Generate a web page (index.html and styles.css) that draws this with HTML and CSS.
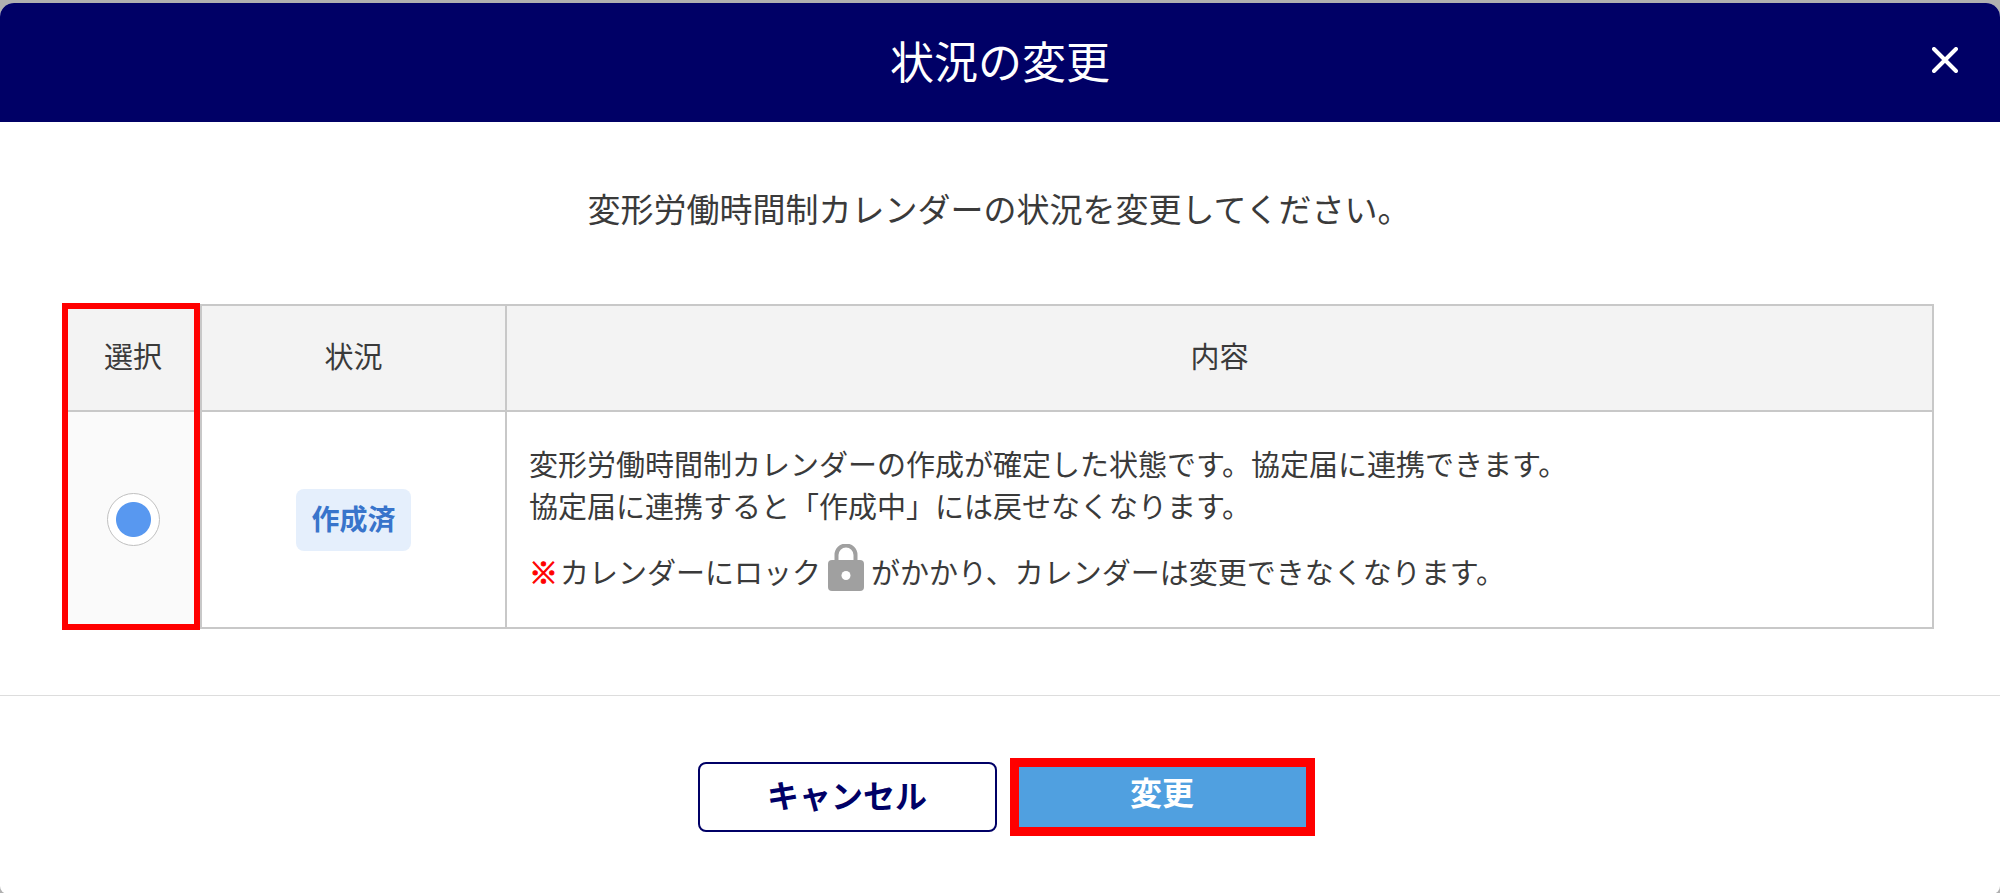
FILE: index.html
```
<!DOCTYPE html>
<html lang="ja">
<head>
  <meta charset="UTF-8" />
  <meta name="viewport" content="width=device-width, initial-scale=1" />
  <title>状況の変更</title>
  <link rel="stylesheet" href="styles.css">
</head>
<body>
  <div class="modal" role="dialog" aria-labelledby="modalTitle">
    <header class="modal-header">
      <h1 id="modalTitle">状況の変更</h1>
      <button class="close-btn" type="button" aria-label="閉じる">
        <svg viewBox="0 0 26 26" width="26" height="26" aria-hidden="true">
          <path d="M2 2 L24 24 M24 2 L2 24" fill="none" stroke="#fff" stroke-width="4" stroke-linecap="round" />
        </svg>
      </button>
    </header>

    <form class="modal-form">
      <div class="modal-body">
        <p class="lead">変形労働時間制カレンダーの状況を変更してください。</p>

        <div class="table-wrap">
          <table class="status-table">
            <thead>
              <tr>
                <th class="col-select">選択</th>
                <th class="col-status">状況</th>
                <th>内容</th>
              </tr>
            </thead>
            <tbody>
              <tr>
                <td class="cell-select">
                  <input type="radio" name="status" id="statusDone" value="done" checked />
                </td>
                <td class="cell-status"><label class="badge" for="statusDone">作成済</label></td>
                <td class="cell-desc">
                  <p>変形労働時間制カレンダーの作成が確定した状態です。協定届に連携できます。<br>協定届に連携すると「作成中」には戻せなくなります。</p>
                  <p class="note">
                    <span class="mark">※</span>
                    <span>カレンダーにロック</span>
                    <svg class="lock" viewBox="0 0 36 47" width="36" height="47" aria-hidden="true">
                      <path d="M8.500 18 V11 a9.500 9.500 0 0 1 19 0 V18" fill="none" stroke="#a0a0a0" stroke-width="4" />
                      <rect x="0" y="16" width="36" height="31" rx="4" fill="#a0a0a0" />
                      <circle cx="18" cy="31.500" r="4.500" fill="#fff" />
                    </svg>
                    <span>がかかり、カレンダーは変更できなくなります。</span>
                  </p>
                </td>
              </tr>
            </tbody>
          </table>
          <div class="highlight"></div>
        </div>
      </div>

      <footer class="modal-footer">
        <button class="btn btn-cancel" type="button">キャンセル</button>
        <button class="btn btn-submit" type="button">変更</button>
      </footer>
    </form>
  </div>
</body>
</html>
```
FILE: styles.css
```
* {
  margin: 0; padding: 0; box-sizing: border-box;
}
body {
  min-height: 100vh;
  display: flex;
  padding-top: 3px;
  background: #b0b0b0;
  color: #3a3a3a;
  font-family: 'Noto Sans CJK JP', sans-serif;
  font-size: 29px;
  line-height: 42px;
}
button {
  font-family: inherit;
  cursor: pointer;
}
.modal {
  display: flex;
  flex-direction: column;
  flex: 1;
  background: #fff;
  border-radius: 14px 14px 8px 8px;
  overflow: hidden;
}
.modal-header {
  display: grid;
  grid-template-columns: 1fr auto 1fr;
  align-items: center;
  height: 119px;
  padding: 0 42px 5px;
  background: #000066;
  color: #fff;
}
.modal-header h1 {
  grid-column: 2;
  font-size: 44px;
  font-weight: 400;
  line-height: 64px;
}
.close-btn {
  display: flex;
  justify-self: end;
  background: none;
  border: none;
}
.modal-form {
  display: flex;
  flex-direction: column;
  flex: 1;
}
.modal-body {
  padding: 62px 66px 66px 64px;
}
.lead {
  margin-bottom: 72px;
  font-size: 33px;
  line-height: 48px;
  text-align: center;
}
.table-wrap {
  position: relative;
}
.status-table {
  width: 100%;
  border-collapse: collapse;
  table-layout: fixed;
}
.status-table th,
.status-table td {
  border: 2px solid #c8c8c8;
}
.status-table th {
  height: 106px;
  padding-bottom: 6px;
  background: #f3f3f3;
  font-weight: 400;
}
.col-select {
  width: 136px;
}
.col-status {
  width: 305px;
}
.status-table td {
  height: 217px;
}
.status-table .cell-select {
  background: #fafafa;
}
.cell-select input {
  appearance: none;
  display: block;
  width: 53px;
  height: 53px;
  margin: 0 auto;
  border: 1px solid #c0c0c0;
  border-radius: 50%;
  background: #fff;
}
.cell-select input:checked {
  background: radial-gradient(circle, #5898f0 17px, #fff 18px);
}
.cell-status {
  text-align: center;
}
.badge {
  display: inline-block;
  height: 62px;
  padding: 0 15px;
  border-radius: 8px;
  background: #e5effc;
  color: #3874cb;
  font-size: 28px;
  font-weight: 700;
  line-height: 58px;
  vertical-align: middle;
}
.cell-desc {
  padding: 0 22px;
}
.note {
  display: flex;
  align-items: center;
  margin-top: 18px;
}
.note .mark {
  margin-right: 2px;
  color: #f00;
  font-weight: 700;
  -webkit-text-stroke: 1px #f00;
}
.note .lock {
  margin: 0 7px 6px;
}
/* red frame round the select column */
.highlight {
  position: absolute;
  top: -1px;
  bottom: -1px;
  left: -2px;
  width: 138px;
  border: 6px solid #f00;
  pointer-events: none;
}
.modal-footer {
  display: flex;
  flex: 1;
  justify-content: center;
  align-items: flex-start;
  gap: 13px;
  padding: 62px 0 58px 12px;
  border-top: 1px solid #ddd;
}
.btn {
  font-size: 32px;
  font-weight: 700;
  line-height: 46px;
}
.btn-cancel {
  width: 299px;
  height: 70px;
  margin-top: 4px;
  padding-bottom: 6px;
  background: #fff;
  border: 2px solid #000066;
  border-radius: 8px;
  color: #000066;
}
.btn-submit {
  width: 305px;
  height: 78px;
  padding-bottom: 12px;
  background: #50a0e0;
  border: 9px solid #f00;
  color: #fff;
}
```
